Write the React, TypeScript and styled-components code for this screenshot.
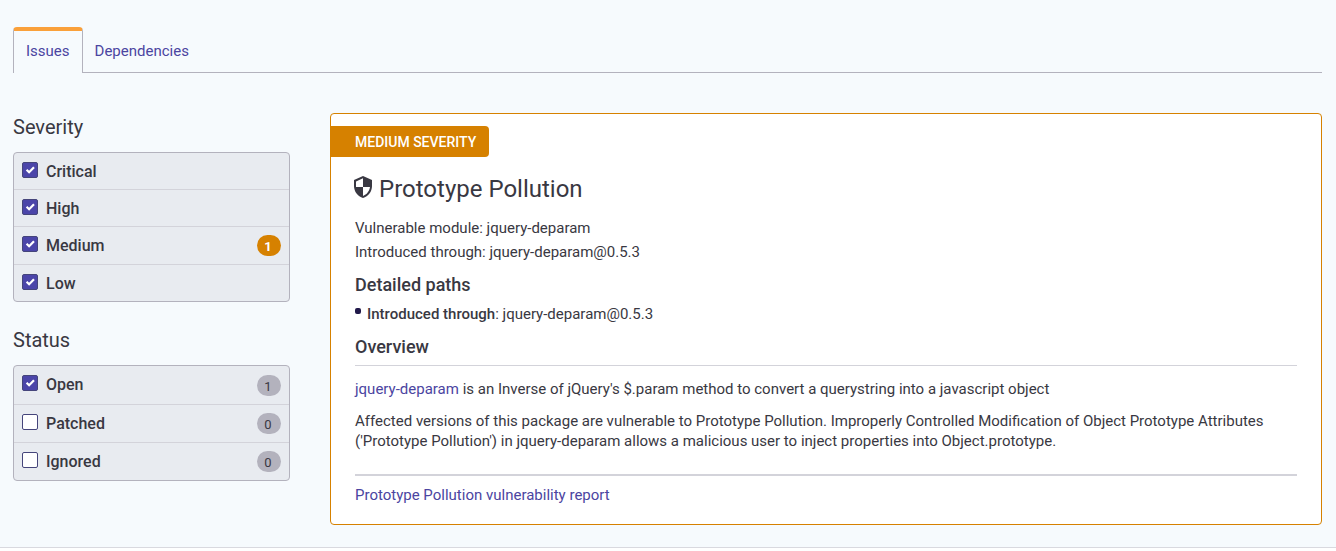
import React from "react";
import styled, { createGlobalStyle } from "styled-components";

const GlobalStyle = createGlobalStyle`
  *, *::before, *::after { box-sizing: border-box; }
  body {
    margin: 0;
    background: #ffffff;
    color: #393842;
    font-family: Roboto, "Liberation Sans", sans-serif;
    font-size: 15px;
    line-height: 20px;
  }
  h2, h3, p, ul { margin: 0; padding: 0; font-weight: 400; }
`;

const Page = styled.div`
  padding: 27px 14px 22px 13px;
  background: #f6fafd;
  border-bottom: 1px solid #d9d9df;
`;

const TabBar = styled.nav`
  display: flex;
`;

const Tab = styled.a<{ $active?: boolean }>`
  height: 46px;
  padding: ${(p) => (p.$active ? "10px 12px 0" : "14px 12px 0")};
  line-height: 20px;
  color: #4b45a1;
  text-decoration: none;
  border: 1px solid transparent;
  border-bottom-color: ${(p) => (p.$active ? "transparent" : "#b3b2bd")};
  border-width: ${(p) => (p.$active ? "4px 1px 0" : "0 0 1px")};
  ${(p) => p.$active && "border-color: #faa03a #b3b2bd transparent; border-radius: 4px 4px 0 0;"}
`;

const TabRule = styled.div`
  flex: 1;
  border-bottom: 1px solid #b3b2bd;
`;

const Columns = styled.div`
  display: flex;
  align-items: flex-start;
  gap: 40px;
  padding-top: 40px;
`;

const Sidebar = styled.aside`
  flex: 0 0 277px;
`;

const FilterTitle = styled.h3`
  height: 39px;
  font-size: 20px;
  line-height: 28px;
`;

const FilterGroup = styled.section`
  & + & { margin-top: 24px; }
`;

const FilterPanel = styled.div`
  background: #e8ebf0;
  border: 1px solid #b3b2bd;
  border-radius: 4px;
`;

const FilterRow = styled.label<{ $counted: boolean }>`
  display: flex;
  align-items: center;
  height: ${(p) => (p.$counted ? "38px" : "37px")};
  padding: ${(p) => (p.$counted ? "0 8px" : "2px 8px 0")};
  font-size: 16px;
  font-weight: 500;
  border-top: 1px solid #d3d3da;
  &:first-child {
    height: ${(p) => (p.$counted ? "38px" : "36px")};
    border-top: 0;
  }
`;

const CheckWrap = styled.span`
  display: grid;
  margin: 0 8px 4px 0;
  > * { grid-area: 1 / 1; }
`;

const CheckInput = styled.input`
  appearance: none;
  width: 16px;
  height: 16px;
  margin: 0;
  background: #ffffff;
  border: 1px solid #45457b;
  border-radius: 2px;
  &:checked { background: #4b45a9; }
  & + svg { visibility: hidden; }
  &:checked + svg { visibility: visible; }
`;

const TickIcon = styled.svg`
  pointer-events: none;
`;

const Count = styled.span<{ $alert?: boolean }>`
  width: 24px;
  height: 21px;
  margin-left: auto;
  padding: 1px 2px 0 0;
  border-radius: 11px;
  background: ${(p) => (p.$alert ? "#d68100" : "#b3b2bd")};
  color: ${(p) => (p.$alert ? "#ffffff" : "#393842")};
  font-size: 13px;
  font-weight: ${(p) => (p.$alert ? 700 : 400)};
  line-height: 21px;
  text-align: center;
`;

const Card = styled.article`
  flex: 1;
  min-width: 0;
  padding: 12px 24px 19px;
  background: #ffffff;
  border: 1px solid #d68100;
  border-radius: 4px;
`;

const SeverityLabel = styled.div`
  width: fit-content;
  margin-left: -24px;
  padding: 1px 13px 0 24px;
  border-radius: 0 4px 4px 0;
  background: #d68100;
  color: #ffffff;
  font-size: 14px;
  font-weight: 500;
  line-height: 30px;
`;

const CardTitle = styled.h2`
  display: flex;
  align-items: center;
  gap: 7px;
  margin: 16px 0 11px -1px;
  font-size: 24px;
  line-height: 32px;
  svg { display: block; margin-bottom: 4px; }
`;

const MetaLine = styled.li`
  line-height: 24px;
  list-style: none;
`;

const SectionTitle = styled.h3<{ $ruled?: boolean }>`
  margin-top: 8px;
  padding-bottom: ${(p) => (p.$ruled ? "5px" : "0")};
  border-bottom: ${(p) => (p.$ruled ? "1px solid #d3d3da" : "0")};
  font-size: 18px;
  font-weight: 500;
  line-height: 26px;
`;

const PathItem = styled.li`
  display: flex;
  margin: 6px 0 10px;
  list-style: none;
  &::before {
    content: "";
    width: 6px;
    height: 6px;
    margin: 4px 6px 0 0;
    border-radius: 2px;
    background: #21194a;
  }
  strong { font-weight: 500; }
`;

const Description = styled.div`
  padding-top: 13px;
`;

const Paragraph = styled.p`
  & + & { margin-top: 12px; }
`;

const Link = styled.a`
  color: #4b45a1;
  text-decoration: none;
`;

const CardFooter = styled.footer`
  margin-top: 23px;
  padding-top: 9px;
  border-top: 2px solid #d3d3da;
`;

type Filter = { label: string; checked: boolean; count?: number; alert?: boolean };

const severities: Filter[] = [
  { label: "Critical", checked: true },
  { label: "High", checked: true },
  { label: "Medium", checked: true, count: 1, alert: true },
  { label: "Low", checked: true },
];

const statuses: Filter[] = [
  { label: "Open", checked: true, count: 1 },
  { label: "Patched", checked: false, count: 0 },
  { label: "Ignored", checked: false, count: 0 },
];

function Filters({ title, items }: { title: string; items: Filter[] }) {
  return (
    <FilterGroup>
      <FilterTitle>{title}</FilterTitle>
      <FilterPanel>
        {items.map((item) => (
          <FilterRow key={item.label} $counted={item.count !== undefined}>
            <CheckWrap>
              <CheckInput type="checkbox" defaultChecked={item.checked} />
              <TickIcon width="16" height="16" viewBox="0 0 16 16" aria-hidden="true">
                <path d="M4.600 7.800l2.500 2.500 4.900-5.100" fill="none" stroke="#fff" strokeWidth="2.200" />
              </TickIcon>
            </CheckWrap>
            {item.label}
            {item.count !== undefined && <Count $alert={item.alert}>{item.count}</Count>}
          </FilterRow>
        ))}
      </FilterPanel>
    </FilterGroup>
  );
}

export default function App() {
  return (
    <>
      <GlobalStyle />
      <Page>
        <TabBar>
          <Tab href="#issues" $active>Issues</Tab>
          <Tab href="#dependencies">Dependencies</Tab>
          <TabRule />
        </TabBar>
        <Columns>
          <Sidebar>
            <Filters title="Severity" items={severities} />
            <Filters title="Status" items={statuses} />
          </Sidebar>
          <Card>
            <SeverityLabel>MEDIUM SEVERITY</SeverityLabel>
            <CardTitle>
              <svg width="18" height="22" viewBox="0 0 18 22" aria-hidden="true">
                <path d="M9 0L0 4v6c0 5.600 3.800 10.700 9 12 5.200-1.300 9-6.400 9-12V4z" fill="#393842" />
                <path d="M9 2.300V11H2V5.400z M9 11h7c-.6 4.100-3.300 7.800-7 8.900z" fill="#fff" />
              </svg>
              Prototype Pollution
            </CardTitle>
            <ul>
              <MetaLine>Vulnerable module: jquery-deparam</MetaLine>
              <MetaLine>Introduced through: jquery-deparam@0.5.3</MetaLine>
            </ul>
            <SectionTitle>Detailed paths</SectionTitle>
            <ul>
              <PathItem>
                <span><strong>Introduced through</strong>: jquery-deparam@0.5.3</span>
              </PathItem>
            </ul>
            <SectionTitle $ruled>Overview</SectionTitle>
            <Description>
              <Paragraph>
                <Link href="#jquery-deparam">jquery-deparam</Link> is an Inverse of jQuery's $.param method to convert a querystring into a javascript object
              </Paragraph>
              <Paragraph>
                Affected versions of this package are vulnerable to Prototype Pollution. Improperly Controlled Modification of Object Prototype Attributes ('Prototype Pollution') in jquery-deparam allows a malicious user to inject properties into Object.prototype.
              </Paragraph>
            </Description>
            <CardFooter>
              <Link href="#report">Prototype Pollution vulnerability report</Link>
            </CardFooter>
          </Card>
        </Columns>
      </Page>
    </>
  );
}
